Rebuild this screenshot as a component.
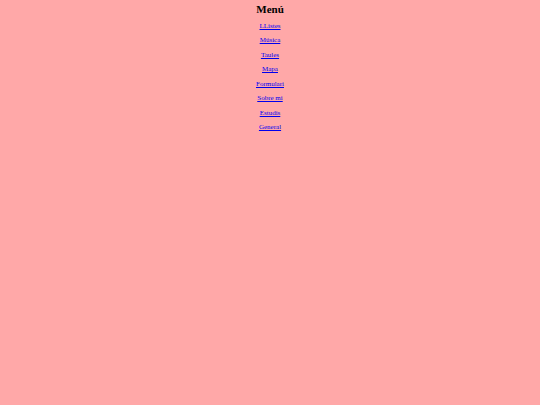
export default function App() {
  const links = ["LListes", "Música", "Taules", "Mapa", "Formulari", "Sobre mi", "Estudis", "General"];
  return (
    <div className="min-h-[405px] w-full bg-[#ffa8a8] text-center font-['Liberation_Serif',serif] text-black">
      <h1 className="pt-[2px] text-[11px] leading-[14px] font-bold">Menú</h1>
      <ul className="mt-[3px]">
        {links.map((l) => (
          <li key={l} className="text-[7px] leading-[14.43px]">
            <a href="#" className="text-[#0000ee] underline">{l}</a>
          </li>
        ))}
      </ul>
    </div>
  );
}
